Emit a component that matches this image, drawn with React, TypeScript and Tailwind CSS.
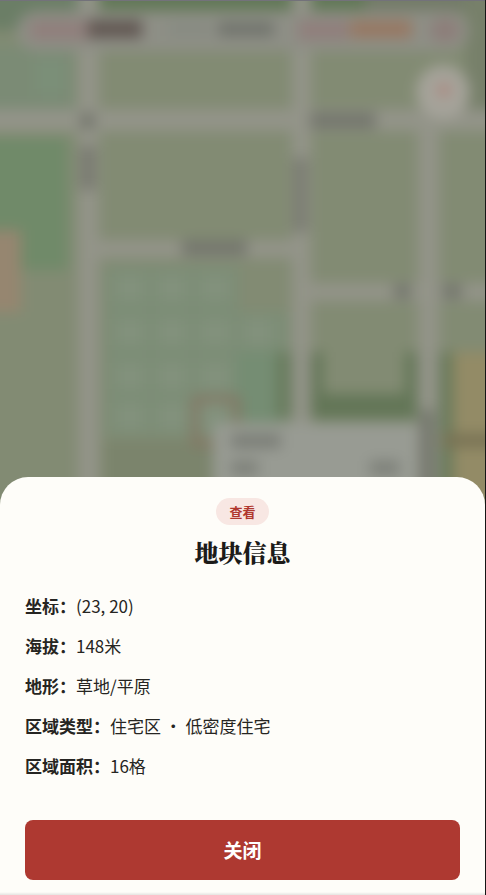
import React, { useState } from 'react';

interface PlotField {
  label: string;
  value: string;
}

const plotFields: PlotField[] = [
  { label: '坐标', value: '(23, 20)' },
  { label: '海拔', value: '148米' },
  { label: '地形', value: '草地/平原' },
  { label: '区域类型', value: '住宅区 · 低密度住宅' },
  { label: '区域面积', value: '16格' },
];

// Centres of the lighter building tiles in the housing block
const tileColumns = [130, 172, 215, 258];
const tileRows = [288, 332, 376, 416];

const MapBackdrop: React.FC = () => (
  <svg
    className="absolute inset-0 h-full w-full"
    viewBox="0 0 485 895"
    preserveAspectRatio="xMidYMin slice"
    aria-hidden="true"
  >
    <defs>
      <filter
        id="soft"
        x="-60"
        y="-60"
        width="620"
        height="1020"
        filterUnits="userSpaceOnUse"
        colorInterpolationFilters="sRGB"
      >
        <feGaussianBlur stdDeviation="7" />
      </filter>
    </defs>
    <rect width="485" height="895" fill="#828b73" />
    <g filter="url(#soft)">
      <rect x="-40" y="-40" width="580" height="980" fill="#828b73" />

      {/* Parks and woods */}
      <rect x="90" y="-30" width="275" height="42" fill="#627857" />
      <rect x="365" y="-30" width="160" height="42" fill="#737b68" />
      <rect x="-30" y="-30" width="108" height="60" fill="#6b7e66" />
      <rect x="-30" y="46" width="104" height="64" fill="#7b8b75" />
      <rect x="35" y="60" width="30" height="34" fill="#7b8f78" />
      <rect x="-30" y="138" width="98" height="132" fill="#708a69" />
      <rect x="-30" y="230" width="51" height="82" fill="#968670" />
      <rect x="466" y="-30" width="60" height="140" fill="#77806a" />

      {/* Housing block */}
      <rect x="106" y="266" width="132" height="170" fill="#7c8d76" />
      <rect x="238" y="312" width="50" height="110" fill="#7c8d76" />
      <rect x="236" y="352" width="42" height="70" fill="#758d73" />
      {tileRows.map((y) =>
        tileColumns
          .filter((x) => x < 240 || y === 332)
          .map((x) => <rect key={`${x}-${y}`} x={x - 14} y={y - 13} width="28" height="26" fill="#82917c" />)
      )}
      <rect x="104" y="440" width="110" height="60" fill="#7b846c" />

      {/* Hedges */}
      <rect x="276" y="352" width="16" height="66" fill="#697c5e" />
      <path d="M309 352h14v42h82v-42h12v67H309z" fill="#637657" />
      <rect x="439" y="352" width="14" height="150" fill="#697a5b" />
      <rect x="453" y="352" width="80" height="150" fill="#938b66" />
      <rect x="442" y="434" width="90" height="13" fill="#787254" />

      {/* Roads */}
      <g fill="#939489">
        <rect x="-30" y="109" width="560" height="22" />
        <rect x="78" y="-30" width="21" height="560" />
        <rect x="292" y="-30" width="19" height="560" />
        <rect x="418" y="110" width="21" height="420" />
        <rect x="98" y="240" width="200" height="18" />
        <rect x="306" y="283" width="220" height="18" />
      </g>

      {/* Road names */}
      <g fill="#75776e">
        <rect x="310" y="112" width="66" height="17" />
        <rect x="80" y="113" width="15" height="16" />
        <rect x="80" y="146" width="16" height="44" fill="#7a7b72" />
        <rect x="293" y="158" width="15" height="74" fill="#7c7d74" />
        <rect x="182" y="240" width="65" height="16" />
        <rect x="394" y="284" width="17" height="15" />
        <rect x="442" y="284" width="20" height="15" />
      </g>

      {/* Selected plot */}
      <rect x="195" y="399" width="42" height="44" fill="none" stroke="#857361" strokeWidth="6" />

      {/* Plot tooltip */}
      <rect x="420" y="410" width="14" height="100" fill="#74776d" />
      <rect x="213" y="423" width="205" height="100" rx="4" fill="#989b93" />
      <rect x="231" y="434" width="50" height="14" fill="#7a7d76" />
      <rect x="231" y="461" width="27" height="14" fill="#7c7f78" />
      <rect x="370" y="461" width="29" height="14" fill="#7c7f78" />

      {/* Status bar */}
      <rect x="17" y="11" width="452" height="40" rx="20" fill="#8e8f86" />
      <rect x="30" y="20" width="60" height="20" fill="#907f7c" />
      <rect x="88" y="20" width="54" height="18" fill="#625853" />
      <rect x="168" y="22" width="42" height="14" fill="#878b82" />
      <rect x="218" y="22" width="56" height="14" fill="#70736c" />
      <rect x="298" y="20" width="50" height="20" fill="#907f7c" />
      <rect x="350" y="20" width="62" height="18" fill="#977863" />
      <rect x="430" y="18" width="30" height="24" rx="12" fill="#8d7e7a" />

      {/* Locate button */}
      <circle cx="443" cy="92" r="27" fill="#a5a39a" />
      <circle cx="444" cy="90" r="7" fill="#ac8880" />
    </g>
    <rect width="485" height="1" fill="#73727a" />
  </svg>
);

const PlotSheet: React.FC<{ onClose: () => void }> = ({ onClose }) => (
  <section
    role="dialog"
    aria-labelledby="plot-title"
    className="relative flex flex-col rounded-t-[28px] bg-[#fefdf9] px-[25px] pt-[21px] pb-[15px] text-[#262522]"
  >
    <span className="self-center rounded-full bg-[#f8e7e3] px-[13px] text-[13px] leading-[27px] font-bold text-[#b0382f]">
      查看
    </span>
    <h2
      id="plot-title"
      className="mt-[11px] text-center font-['Noto_Serif_CJK_SC','Noto_Serif_SC','Noto_Sans_CJK_SC',serif] text-2xl leading-8 font-black text-[#1c1b19]"
    >
      地块信息
    </h2>

    <dl className="mt-6 flex flex-col gap-3 text-[17px] leading-7">
      {plotFields.map((field) => (
        <div key={field.label} className="flex">
          <dt className="shrink-0 font-bold">{field.label}：</dt>
          <dd>{field.value}</dd>
        </div>
      ))}
    </dl>

    <button
      type="button"
      onClick={onClose}
      className="mt-10 h-[60px] w-full rounded-lg bg-[#ae3931] text-[19px] font-bold text-white hover:bg-[#9c322b]"
    >
      关闭
    </button>
    <div className="absolute inset-x-0 bottom-0 h-[3px] bg-linear-to-b from-transparent to-black/10" />
  </section>
);

export default function App() {
  const [isOpen, setIsOpen] = useState(true);

  return (
    <main
      lang="zh-CN"
      className="relative flex min-h-screen flex-col justify-end overflow-hidden border-r border-[#161616] font-['Noto_Sans_CJK_SC',sans-serif]"
    >
      <MapBackdrop />
      {isOpen && <PlotSheet onClose={() => setIsOpen(false)} />}
    </main>
  );
}
